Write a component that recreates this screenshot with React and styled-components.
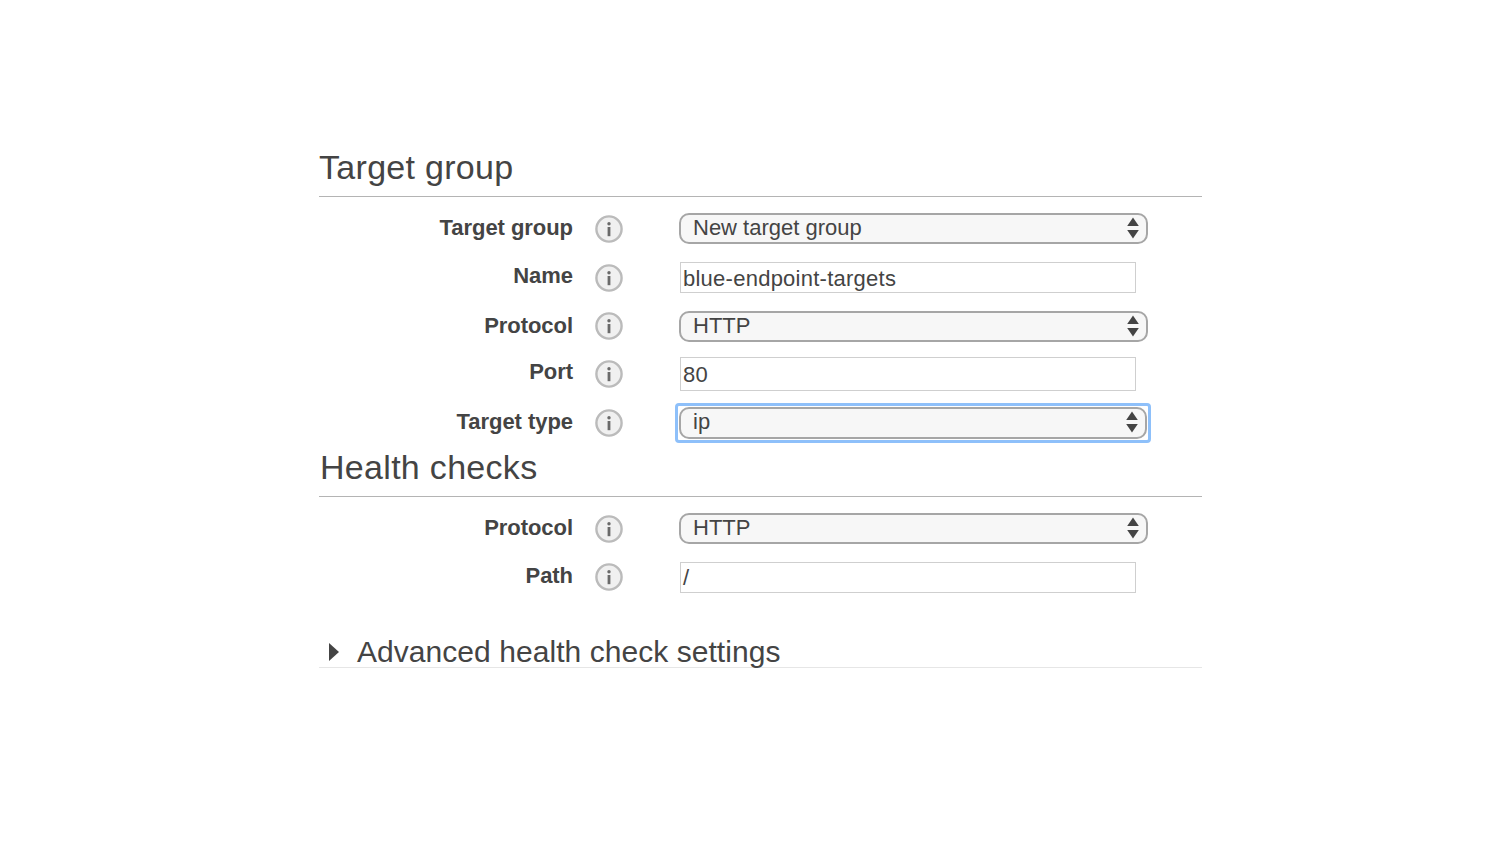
import React from "react";
import styled, { createGlobalStyle } from "styled-components";

const GlobalStyle = createGlobalStyle`
  html, body {
    margin: 0;
    background: #fff;
  }
  body {
    font-family: "Liberation Sans", Arial, sans-serif;
    color: #444;
  }
`;

const Page = styled.div`
  width: 883px;
  margin-left: 319px;
  padding-top: 147px;
`;

const SectionTitle = styled.h2`
  margin: 0;
  height: ${(p) => p.$height}px;
  font-size: 34px;
  line-height: 40px;
  font-weight: 400;
  letter-spacing: 0.3px;
  color: #444;
  border-bottom: 1px solid #b4b4b4;
  box-sizing: content-box;
  padding-left: ${(p) => (p.$inset ? 1 : 0)}px;
`;

const Rows = styled.div`
  display: flex;
  flex-direction: column;
  padding-top: ${(p) => p.$top}px;
`;

const Row = styled.div`
  display: grid;
  grid-template-columns: 254px 22px 28px 56px 1fr;
  align-items: center;
  height: ${(p) => p.$height}px;
`;

const Label = styled.label`
  grid-column: 1;
  text-align: right;
  font-size: 22px;
  font-weight: 700;
  letter-spacing: -0.05px;
  color: #444;
  position: relative;
  top: ${(p) => p.$lift || 0}px;
`;

const InfoWrap = styled.span`
  grid-column: 3;
  display: flex;
  width: 28px;
  height: 28px;
`;

const FieldCell = styled.div`
  grid-column: 5;
  display: flex;
`;

const SelectBox = styled.div`
  box-sizing: border-box;
  width: 469px;
  height: 31px;
  display: flex;
  align-items: center;
  justify-content: space-between;
  padding: 0 6px 1px 12px;
  background: #f7f7f7;
  border: 2px solid #a6a6a6;
  border-radius: 10px;
  font-size: 22px;
  color: #444;
`;

const FocusRing = styled.div`
  display: flex;
  margin-left: -4px;
  padding: 1px;
  background: #fff;
  border: 3px solid #8ec0fa;
  border-radius: 4px;
  & > ${SelectBox} {
    height: 32px;
    width: 468px;
  }
`;

const TextInput = styled.div`
  box-sizing: border-box;
  width: 456px;
  margin-left: 1px;
  height: ${(p) => p.$height || 31}px;
  display: flex;
  align-items: center;
  padding: 2px 0 0 2px;
  background: #fff;
  border: 1.5px solid #cfcfcf;
  font-size: 22px;
  letter-spacing: 0.25px;
  color: #444;
`;

const Disclosure = styled.div`
  display: flex;
  align-items: center;
  gap: 18px;
  height: 30px;
  margin-top: 35px;
  padding: 1px 0 0 10px;
  font-size: 30px;
  letter-spacing: 0.05px;
  color: #444;
  border-bottom: 1px solid #e6e6e6;
`;

const InfoIcon = () => (
  <svg width="28" height="28" viewBox="0 0 28 28" aria-hidden="true">
    <circle cx="14" cy="14" r="12.6" fill="#f0f0f0" stroke="#bbbbbb" strokeWidth="2.4" />
    <circle cx="14" cy="8.8" r="1.7" fill="#6a6a6a" />
    <rect x="12.6" y="12" width="2.8" height="9.2" fill="#6a6a6a" />
  </svg>
);

const Stepper = () => (
  <svg width="14" height="24" viewBox="0 0 14 24" aria-hidden="true">
    <path d="M7 1.5 L12.8 10 L1.2 10 Z" fill="#444" />
    <path d="M1.2 14 L12.8 14 L7 22.5 Z" fill="#444" />
  </svg>
);

const Caret = () => (
  <svg width="10" height="18" viewBox="0 0 10 18" aria-hidden="true">
    <path d="M0 0 L10 9 L0 18 Z" fill="#444" />
  </svg>
);

const Select = ({ value }) => (
  <SelectBox>
    <span>{value}</span>
    <Stepper />
  </SelectBox>
);

const FormRow = ({ label, height, lift, children }) => (
  <Row $height={height}>
    <Label $lift={lift}>{label}</Label>
    <InfoWrap>
      <InfoIcon />
    </InfoWrap>
    <FieldCell>{children}</FieldCell>
  </Row>
);

const App = () => (
  <>
    <GlobalStyle />
    <Page>
      <SectionTitle $height={49}>Target group</SectionTitle>
      <Rows $top={7}>
        <FormRow label="Target group" height={49} lift={-1}>
          <Select value="New target group" />
        </FormRow>
        <FormRow label="Name" height={49} lift={-2}>
          <TextInput>blue-endpoint-targets</TextInput>
        </FormRow>
        <FormRow label="Protocol" height={48}>
          <Select value="HTTP" />
        </FormRow>
        <FormRow label="Port" height={48} lift={-2}>
          <TextInput $height={34}>80</TextInput>
        </FormRow>
        <FormRow label="Target type" height={49} lift={-1}>
          <FocusRing>
            <Select value="ip" />
          </FocusRing>
        </FormRow>
      </Rows>
      <SectionTitle $height={49} $inset>
        Health checks
      </SectionTitle>
      <Rows $top={7}>
        <FormRow label="Protocol" height={49} lift={-1}>
          <Select value="HTTP" />
        </FormRow>
        <FormRow label="Path" height={48} lift={-1}>
          <TextInput>/</TextInput>
        </FormRow>
      </Rows>
      <Disclosure>
        <Caret />
        <span>Advanced health check settings</span>
      </Disclosure>
    </Page>
  </>
);

export default App;
